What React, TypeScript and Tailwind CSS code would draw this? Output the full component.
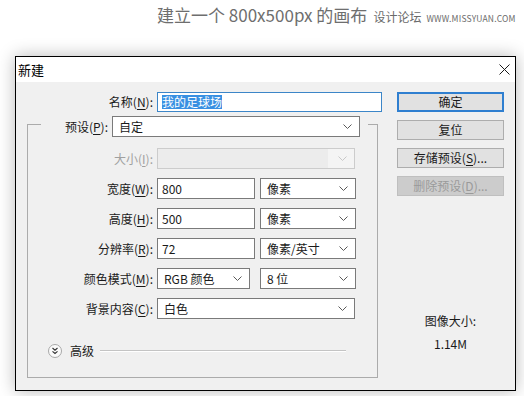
import React from 'react';

const FONT = "font-['Noto_Sans_CJK_SC','Noto_Sans',sans-serif]";

const Chevron = ({ disabled = false }: { disabled?: boolean }) => (
  <svg width="9" height="5" viewBox="0 0 9 5" className="shrink-0">
    <path d="M0.5 0.5 L4.5 4.5 L8.5 0.5" fill="none" stroke={disabled ? '#c8c8c8' : '#5a5a5a'} strokeWidth="1" />
  </svg>
);

// label such as 名称(N): with the access key underlined
const Label = ({ text, hotkey, disabled = false }: { text: string; hotkey: string; disabled?: boolean }) => (
  <span className={disabled ? 'text-[#a0a0a0]' : 'text-[#1a1a1a]'}>
    {text}(<span className="underline underline-offset-2">{hotkey}</span>):
  </span>
);

const Select = ({ value, width }: { value: string; width: string }) => (
  <div className={`${width} h-[21px] flex items-center justify-between bg-white border border-[#7a7a7a] pl-[6px] pr-[7px] text-[12px] text-[#1a1a1a]`}>
    <span>{value}</span>
    <Chevron />
  </div>
);

const Input = ({ value, width }: { value: string; width: string }) => (
  <div className={`${width} h-[21px] flex items-center bg-white border border-[#7a7a7a] pl-[4px] text-[12px] text-[#1a1a1a]`}>
    {value}
  </div>
);

const Row = ({ children }: { children: React.ReactNode }) => (
  <div className="flex items-center h-[21px]">{children}</div>
);

const RowLabel = ({ children }: { children: React.ReactNode }) => (
  <div className="w-[125px] text-right text-[12px] mr-[4px]">{children}</div>
);

const Button = ({ children, primary = false, disabled = false }: { children: React.ReactNode; primary?: boolean; disabled?: boolean }) => {
  let cls = 'bg-[#e1e1e1] border border-[#adadad] text-[#1a1a1a]';
  if (primary) cls = 'bg-[#e1e1e1] border-2 border-[#2f7fd0] text-[#1a1a1a]';
  if (disabled) cls = 'bg-[#cccccc] border border-[#bfbfbf] text-[#9a9a9a]';
  return (
    <div className={`w-[107px] h-[20px] flex items-center justify-center text-[12px] ${cls}`}>{children}</div>
  );
};

const AdvancedIcon = () => (
  <svg width="14" height="14" viewBox="0 0 14 14" className="shrink-0">
    <circle cx="7" cy="7" r="6.5" fill="#fbfbfb" stroke="#a8a8a8" />
    <path d="M4.5 4 L7 6.2 L9.5 4 M4.5 7.3 L7 9.5 L9.5 7.3" fill="none" stroke="#333" strokeWidth="1.1" />
  </svg>
);

export default function App() {
  return (
    <div className={`w-[524px] h-[396px] bg-white overflow-hidden ${FONT}`}>
      {/* page heading with site watermark */}
      <div className="h-[56px] pl-[157px] pt-[3px] flex items-baseline whitespace-nowrap">
        <span className="text-[17px] leading-[24px] text-[#6e6e6e]">建立一个 800x500px 的画布</span>
        <span className="ml-[6px] text-[12px] text-[#6a6a6a]">设计论坛</span>
        <span className="ml-[5px] text-[8.5px] tracking-[0.2px] text-[#6a6a6a]">WWW.MISSYUAN.COM</span>
      </div>

      {/* dialog */}
      <div className="ml-[15px] w-[501px] h-[335px] border border-black flex flex-col shadow-[0_0_16px_rgba(0,0,0,0.28)]">
        <div className="h-[25px] bg-white flex items-center justify-between pl-[2px] pr-[5px]">
          <span className="text-[13px] text-black">新建</span>
          <svg width="11" height="11" viewBox="0 0 11 11">
            <path d="M0.5 0.5 L10.5 10.5 M10.5 0.5 L0.5 10.5" stroke="#1a1a1a" strokeWidth="1" />
          </svg>
        </div>

        <div className="flex-1 bg-[#f0f0f0] flex">
          {/* left column */}
          <div className="w-[381px] flex flex-col">
            <div className="flex items-center mt-[10px] h-[20px]">
              <div className="w-[137px] text-right text-[12px] mr-[4px]">
                <Label text="名称" hotkey="N" />
              </div>
              <div className="w-[225px] h-[20px] flex items-center bg-white border border-[#3c86c8] pl-[4px] text-[12px]">
                <span className="bg-[#3990e2] text-white leading-[14px]">我的足球场</span>
              </div>
            </div>

            {/* preset group box */}
            <div className="ml-[11px] mt-[12px] w-[351px] h-[254px] border border-[#ababab] flex flex-col">
              <div className="-mt-[9px] ml-[13px] w-[327px] bg-[#f0f0f0] flex items-center justify-end gap-[4px] pr-[8px]">
                <span className="text-[12px]">
                  <Label text="预设" hotkey="P" />
                </span>
                <Select value="自定" width="w-[248px]" />
              </div>

              <div className="mt-[11px] flex flex-col gap-[9px]">
                <Row>
                  <RowLabel>
                    <Label text="大小" hotkey="I" disabled />
                  </RowLabel>
                  <div className="w-[198px] h-[21px] flex items-center justify-between bg-[#f4f4f4] border border-[#cccccc] pr-[7px]">
                    <div className="w-[170px] h-full bg-[#ececec]" />
                    <Chevron disabled />
                  </div>
                </Row>
                <Row>
                  <RowLabel>
                    <Label text="宽度" hotkey="W" />
                  </RowLabel>
                  <Input value="800" width="w-[98px]" />
                  <div className="ml-[5px]">
                    <Select value="像素" width="w-[96px]" />
                  </div>
                </Row>
                <Row>
                  <RowLabel>
                    <Label text="高度" hotkey="H" />
                  </RowLabel>
                  <Input value="500" width="w-[98px]" />
                  <div className="ml-[5px]">
                    <Select value="像素" width="w-[96px]" />
                  </div>
                </Row>
                <Row>
                  <RowLabel>
                    <Label text="分辨率" hotkey="R" />
                  </RowLabel>
                  <Input value="72" width="w-[98px]" />
                  <div className="ml-[5px]">
                    <Select value="像素/英寸" width="w-[96px]" />
                  </div>
                </Row>
                <Row>
                  <RowLabel>
                    <Label text="颜色模式" hotkey="M" />
                  </RowLabel>
                  <Select value="RGB 颜色" width="w-[93px]" />
                  <div className="ml-[10px]">
                    <Select value="8 位" width="w-[96px]" />
                  </div>
                </Row>
                <Row>
                  <RowLabel>
                    <Label text="背景内容" hotkey="C" />
                  </RowLabel>
                  <Select value="白色" width="w-[198px]" />
                </Row>
              </div>

              <div className="mt-[23px] ml-[20px] flex items-center">
                <AdvancedIcon />
                <span className="ml-[8px] text-[12px] text-[#1a1a1a]">高级</span>
                <div className="ml-[6px] w-[246px] border-t border-[#c4c4c4] border-b border-b-white" />
              </div>
            </div>
          </div>

          {/* right column */}
          <div className="w-[107px] flex flex-col">
            <div className="mt-[10px] flex flex-col gap-[8px]">
              <Button primary>确定</Button>
              <Button>复位</Button>
              <Button>
                存储预设(<span className="underline underline-offset-2">S</span>)...
              </Button>
              <Button disabled>
                删除预设(<span className="underline underline-offset-2">D</span>)...
              </Button>
            </div>
            <div className="mt-[117px] text-center text-[12px] leading-[16px] text-[#1a1a1a]">图像大小:</div>
            <div className="mt-[7px] text-center text-[12px] leading-[16px] text-[#1a1a1a]">1.14M</div>
          </div>
        </div>
      </div>
    </div>
  );
}
